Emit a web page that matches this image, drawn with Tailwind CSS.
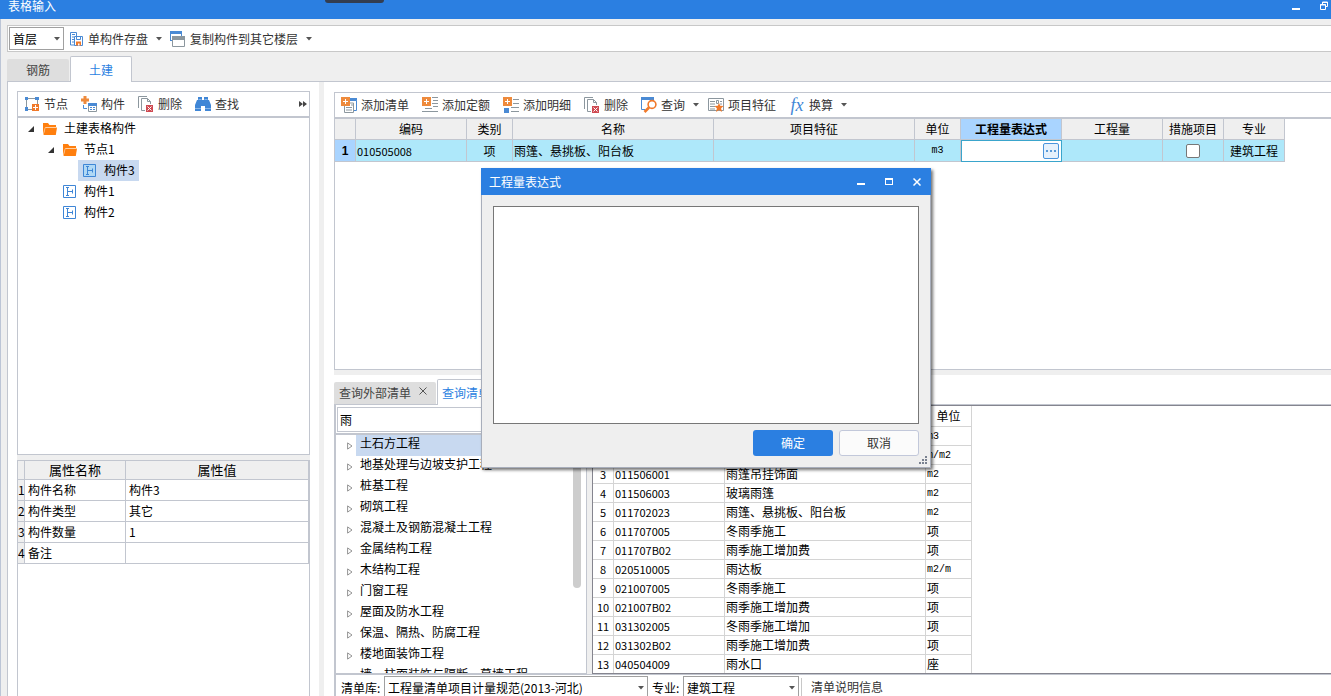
<!DOCTYPE html>
<html lang="zh-CN">
<head>
<meta charset="utf-8">
<title>表格输入</title>
<script src="https://cdn.jsdelivr.net/npm/@tailwindcss/browser@4"></script>
</head>
<body class="relative flex h-screen flex-col overflow-hidden bg-[#efefef] font-['Noto_Sans_CJK_SC',sans-serif] text-[12px] leading-[16px] text-black">

<svg class="hidden">
  <symbol id="i-arrow" viewBox="0 0 6 4"><path d="M0 0h6L3 3.6z" fill="#555"/></symbol>
  <symbol id="i-save" viewBox="0 0 14 16"><path d="M5 14H.5V1.500H6.500V5" fill="none" stroke="#4a8ad4"/><path d="M2 3.500h3M2 6h2M2 8.500h2M2 11h2" stroke="#4a8ad4"/><path d="M4.500 5.500h8v9h-8z" fill="#fff" stroke="#4a8ad4"/><path d="M6.500 5.500v3h4v-3" fill="none" stroke="#4a8ad4"/><path d="M6 10.500h5v4H6z" fill="#f0792a"/><path d="M8 12.500h1.500v2H8z" fill="#fff"/></symbol>
  <symbol id="i-copy" viewBox="0 0 16 16"><path d="M.5 10V.5h11V5M.5 9.500h2" fill="none" stroke="#4a8ad4"/><path d="M0 0h12v3H0z" fill="#4a8ad4"/><path d="M2.500 5.500h12v10h-12z" fill="#fff" stroke="#8c979e"/><path d="M2 5h13v4H2z" fill="#8c979e"/></symbol>
  <symbol id="i-node" viewBox="0 0 16 16"><path d="M2.500 2.500h11v7M8 13.500H2.500v-11" fill="none" stroke="#8c979e"/><path d="M1 1h3v3H1zM11 1h4v3h-4zM1 11h3v4H1z" fill="#4a8ad4"/><path d="M8 8h7v7H8z" fill="#f0792a"/><path d="M11.500 9v5M9 11.500h5" stroke="#fff"/></symbol>
  <symbol id="i-comp" viewBox="0 0 16 16"><path d="M2.500 0h3v2.500H8v3H5.500V8h-3V5.500H0v-3h2.500z" fill="#ee8a3c"/><path d="M2.500 9v3.500H6" fill="none" stroke="#4a8ad4"/><path d="M7.500 7.500h8v8h-8z" fill="#fff" stroke="#8c979e"/><path d="M7 7h9v3H7z" fill="#4a8ad4"/><path d="M9 11.500h2M12 11.500h2M9 13.500h2M12 13.500h2" stroke="#4a8ad4"/></symbol>
  <symbol id="i-del" viewBox="0 0 16 16"><path d="M.5 12V.5H9" fill="none" stroke="#8c979e"/><path d="M7 14.500H3.500v-12H9.500l3 3V8" fill="none" stroke="#8c979e"/><path d="M9.500 2.500v3h3" fill="none" stroke="#8c979e"/><path d="M8 9h7v7H8z" fill="#cf4a52"/><path d="M9.500 10.500l4 4M13.500 10.500l-4 4" stroke="#fff"/></symbol>
  <symbol id="i-find" viewBox="0 0 16 16"><path d="M3 1h4v3h2V1h4v3h1l2 5v6h-6v-5H6v5H0V9l2-5h1z" fill="#3f86d6"/><path d="M3.500 3.500h3M9.500 3.500h3M0 12.500h6M10 12.500h6" stroke="#a9cdf2" stroke-width=".7"/></symbol>
  <symbol id="i-addlist" viewBox="0 0 16 16"><path d="M9 3.500h6.500v10H13" fill="none" stroke="#4a8ad4"/><path d="M9 1h7v2.500H9z" fill="#4a8ad4"/><path d="M3.500 9v6.500h9V6H9" fill="#fff" stroke="#8c979e"/><path d="M5 10.500h6M5 13h6M10 8h2" stroke="#8c979e"/><path d="M0 0h9v9H0z" fill="#ee8a3c"/><path d="M4.500 2v5M2 4.500h5" stroke="#fff"/></symbol>
  <symbol id="i-addquota" viewBox="0 0 16 16"><path d="M10 .5h6M11 3.500h5M10 6.500h6M11 9.500h5M3 11.500h7M0 14.500h16" stroke="#8c979e"/><path d="M0 0h9v9H0z" fill="#ee8a3c"/><path d="M4.500 2v5M2 4.500h5" stroke="#fff"/></symbol>
  <symbol id="i-adddetail" viewBox="0 0 16 16"><path d="M10 2.500h6M10 6.500h6M8 10.500h8M8 14.500h8" stroke="#8c979e"/><path d="M1 11h5v5H1z" fill="#4a8ad4"/><path d="M0 0h9v9H0z" fill="#ee8a3c"/><path d="M4.500 2v5M2 4.500h5" stroke="#fff"/></symbol>
  <symbol id="i-query" viewBox="0 0 16 16"><path d="M4 12.500H.5V1M12.500 1v2" fill="none" stroke="#4a8ad4"/><path d="M0 0h13v3H0z" fill="#4a8ad4"/><circle cx="11" cy="7.500" r="3.900" fill="#fff" stroke="#f0792a" stroke-width="1.600"/><path d="M8 10.500L3.500 15" stroke="#f0792a" stroke-width="2.600"/></symbol>
  <symbol id="i-feature" viewBox="0 0 16 16"><path d="M.5 1.500h15v12H.5z" fill="#fff" stroke="#8c979e"/><path d="M2 4.500h5M2 7h5M2 9.500h5M2 12h5M12 4.500h2M12 7h2" stroke="#8c979e"/><path d="M8.500 3.500h2v3h-2z" fill="none" stroke="#8c979e"/><path d="M11 6l1.200 2.800 3.300.3-2.400 2.200.8 3.700-2.900-2-2.900 2 .8-3.700-2.400-2.200 3.300-.3z" fill="#f0792a"/></symbol>
  <symbol id="i-folder" viewBox="0 0 14 12"><path d="M0 12V0h5l1.500 2H13v2H3z" fill="#ff7f0e"/><path d="M2 4.600h12L12.800 12H.6z" fill="#ff7f0e"/><path d="M.5 10.500L2.200 4.500H13.500" fill="none" stroke="#ffd9b0" stroke-width=".7"/></symbol>
  <symbol id="i-item" viewBox="0 0 13 13"><path d="M.5.500h12v12H.5z" fill="none" stroke="#3f86d6"/><path d="M3 2.500h3M4.500 2.500v8M3 10.500h3M4.500 6.500h5M9.500 4.500v4" fill="none" stroke="#3f86d6"/></symbol>
  <symbol id="i-open" viewBox="0 0 6 6"><path d="M6 0v6H0z" fill="#333"/></symbol>
  <symbol id="i-closed" viewBox="0 0 6 8"><path d="M.6.900L5 4 .6 7.100z" fill="#fff" stroke="#888" stroke-width=".9"/></symbol>
</svg>

<!-- window title -->
<header class="flex h-[19px] shrink-0 items-start justify-between bg-[#2b7fe1] pl-2 text-white">
  <h1 class="leading-[12px]">表格输入</h1>
  <div class="flex gap-5">
    <button aria-label="最小化" class="pt-[7px]"><span class="block h-[2px] w-2 bg-white"></span></button>
    <button aria-label="还原" class="pt-px pr-[3px]"><svg class="h-[9px] w-[8px]" viewBox="0 0 8 9"><path d="M2.500 3V1h5v4.500H6M2 1.500h6" fill="none" stroke="#fff"/><path d="M.5 3.500h5v5h-5z" fill="none" stroke="#fff"/><path d="M0 4h6" stroke="#fff"/></svg></button>
  </div>
</header>
<div class="absolute top-0 left-[325px] h-[3px] w-[59px] rounded-b bg-[#333d50]"></div>

<main class="flex min-h-0 flex-1 flex-col border-l border-[#bcc5d6] pt-1.5 pl-1.5">
  <div class="flex h-[27px] shrink-0 items-center border border-r-0 border-[#c8c8c8] bg-white pl-px text-[#333]">
    <div class="relative">
      <select aria-label="楼层" class="block h-[23px] w-[55px] appearance-none border border-[#a0a0a0] bg-white pl-[3px] text-black"><option>首层</option></select>
      <svg class="pointer-events-none absolute top-2.5 right-1 h-1 w-1.5"><use href="#i-arrow"/></svg>
    </div>
    <button class="ml-1.5 flex items-center gap-1"><svg class="h-4 w-3.5"><use href="#i-save"/></svg>单构件存盘<svg class="ml-1 h-1 w-1.5"><use href="#i-arrow"/></svg></button>
    <button class="ml-2 flex items-center gap-1"><svg class="size-4"><use href="#i-copy"/></svg>复制构件到其它楼层<svg class="ml-1 h-1 w-1.5"><use href="#i-arrow"/></svg></button>
  </div>

  <div role="tablist" class="mt-1 flex h-[25px] shrink-0 items-end gap-px">
    <button role="tab" class="h-[22px] w-[62px] rounded-t-xs bg-[#dedede] text-[#444]">钢筋</button>
    <button role="tab" aria-selected="true" class="relative -mb-px h-[26px] w-[62px] rounded-t-xs border border-b-0 border-[#c2c6cf] bg-white text-[#2b7fe1]">土建</button>
  </div>

  <div class="flex min-h-0 flex-1 border-t border-l border-[#c2c6cf] bg-white">
    <!-- component tree and properties -->
    <aside class="flex w-[311px] shrink-0 flex-col px-[9px] pt-[9px]">
      <div class="flex h-[26px] shrink-0 items-center gap-[13px] border border-[#c2c6cf] pl-1.5 text-[#333]">
        <button class="flex items-center gap-1"><svg class="size-4"><use href="#i-node"/></svg>节点</button>
        <button class="flex items-center gap-1"><svg class="size-4"><use href="#i-comp"/></svg>构件</button>
        <button class="flex items-center gap-1"><svg class="size-4"><use href="#i-del"/></svg>删除</button>
        <button class="flex items-center gap-1"><svg class="size-4"><use href="#i-find"/></svg>查找</button>
        <button aria-label="更多" class="mr-0.5 ml-auto"><svg class="h-[6px] w-[8px]" viewBox="0 0 8 6"><path d="M0 0l4 3-4 3zM4 0l4 3-4 3z" fill="#444"/></svg></button>
      </div>
      <ul role="tree" class="min-h-0 flex-[336] border border-[#c2c6cf] [&_span]:pb-0.5">
        <li class="flex h-[21px] items-center pl-2.5"><svg class="size-1.5"><use href="#i-open"/></svg><svg class="ml-[9px] h-3 w-3.5"><use href="#i-folder"/></svg><span class="ml-[7px]">土建表格构件</span></li>
        <li class="flex h-[21px] items-center pl-[30px]"><svg class="size-1.5"><use href="#i-open"/></svg><svg class="ml-[9px] h-3 w-3.5"><use href="#i-folder"/></svg><span class="ml-[7px]">节点1</span></li>
        <li class="ml-[60px] flex h-[21px] w-[61px] items-center bg-[#c8d9f0] pl-[5px]"><svg class="size-[13px] bg-[#b0d8f5]"><use href="#i-item"/></svg><span class="ml-2">构件3</span></li>
        <li class="flex h-[21px] items-center pl-[45px]"><svg class="size-[13px]"><use href="#i-item"/></svg><span class="ml-2">构件1</span></li>
        <li class="flex h-[21px] items-center pl-[45px]"><svg class="size-[13px]"><use href="#i-item"/></svg><span class="ml-2">构件2</span></li>
      </ul>
      <div class="h-[5px] shrink-0 bg-[#efefef]"></div>
      <div class="min-h-0 flex-[235] overflow-hidden border border-b-0 border-[#c2c6cf]">
        <table class="w-full table-fixed border-separate border-spacing-0 [&_td]:h-[21px] [&_td]:border-r [&_td]:border-b [&_td]:border-[#c2c6cf] [&_td]:py-0 [&_td]:pr-0 [&_td]:pl-[3px] [&_th]:border-r [&_th]:border-b [&_th]:border-[#c2c6cf] [&_th]:p-0 [&_th]:font-normal">
          <colgroup><col class="w-[7px]"><col class="w-[101px]"><col></colgroup>
          <thead><tr class="h-[19px] bg-[#efefef] text-[13px]"><th></th><th>属性名称</th><th>属性值</th></tr></thead>
          <tbody>
            <tr><th class="bg-[#efefef]">1</th><td>构件名称</td><td>构件3</td></tr>
            <tr><th class="bg-[#efefef]">2</th><td>构件类型</td><td>其它</td></tr>
            <tr><th class="bg-[#efefef]">3</th><td>构件数量</td><td>1</td></tr>
            <tr><th class="bg-[#efefef]">4</th><td>备注</td><td></td></tr>
          </tbody>
        </table>
      </div>
    </aside>
    <div class="w-[5px] shrink-0 bg-[#efefef]"></div>

    <section class="flex min-w-0 flex-1 flex-col pt-2.5 pl-2.5">
      <div class="flex min-h-0 flex-[276] flex-col border border-r-0 border-[#c2c6cf]">
        <div class="flex h-[26px] shrink-0 items-center gap-[13px] border-b-2 border-[#c2c6cf] pl-1.5 text-[#333]">
          <button class="flex items-center gap-1"><svg class="size-4"><use href="#i-addlist"/></svg>添加清单</button>
          <button class="flex items-center gap-1"><svg class="size-4"><use href="#i-addquota"/></svg>添加定额</button>
          <button class="flex items-center gap-1"><svg class="size-4"><use href="#i-adddetail"/></svg>添加明细</button>
          <button class="flex items-center gap-1"><svg class="size-4"><use href="#i-del"/></svg>删除</button>
          <button class="-mr-1 flex items-center gap-1"><svg class="size-4"><use href="#i-query"/></svg>查询<svg class="ml-1 h-1 w-1.5"><use href="#i-arrow"/></svg></button>
          <button class="flex items-center gap-1"><svg class="size-4"><use href="#i-feature"/></svg>项目特征</button>
          <button class="flex items-center gap-1"><span aria-hidden="true" class="w-4 font-['Liberation_Serif',serif] text-[18px] text-[#3f86d6] italic">fx</span>换算<svg class="ml-1 h-1 w-1.5"><use href="#i-arrow"/></svg></button>
        </div>
        <table class="w-[950px] table-fixed border-separate border-spacing-0 [&_td]:h-[22px] [&_td]:border-r [&_td]:border-b [&_td]:border-[#c2c6cf] [&_td]:p-0 [&_th]:border-r [&_th]:border-b [&_th]:border-[#c2c6cf] [&_th]:p-0">
          <colgroup><col class="w-[21px]"><col class="w-[111px]"><col class="w-[46px]"><col class="w-[201px]"><col class="w-[201px]"><col class="w-[46px]"><col class="w-[101px]"><col class="w-[101px]"><col class="w-[61px]"><col class="w-[61px]"></colgroup>
          <thead><tr class="h-[21px] bg-[#efefef] [&_th]:font-normal"><th></th><th>编码</th><th>类别</th><th>名称</th><th>项目特征</th><th>单位</th><th class="bg-[#a9d4ff]"><b>工程量表达式</b></th><th>工程量</th><th>措施项目</th><th>专业</th></tr></thead>
          <tbody><tr class="bg-[#aee8fa] text-center">
            <th class="bg-[#a9d4ff] font-['Liberation_Sans',sans-serif] font-bold">1</th>
            <td class="text-left text-[11px]"><span class="pl-px">010505008</span></td><td>项</td><td class="text-left"><span class="pl-px">雨篷、悬挑板、阳台板</span></td><td></td>
            <td class="font-['Liberation_Mono',monospace] text-[10px]">m3</td>
            <td class="bg-white outline outline-1 -outline-offset-1 outline-[#3aa5cc]"><div class="flex justify-end pr-[2px]"><button aria-label="编辑表达式" class="flex size-4 items-center justify-center rounded-xs border border-[#4a94dc] bg-[#e6f1fc]"><svg class="h-[2px] w-2.5" viewBox="0 0 10 2"><path d="M0 0h2v2H0zM4 0h2v2H4zM8 0h2v2H8z" fill="#5a9ad8"/></svg></button></div></td>
            <td></td>
            <td><input type="checkbox" aria-label="措施项目" class="mx-auto block size-3.5 appearance-none rounded-xs border border-[#777] bg-white"></td>
            <td>建筑工程</td>
          </tr></tbody>
        </table>
      </div>
      <div class="h-[5px] shrink-0 bg-[#efefef]"></div>

      <!-- list query pane -->
      <div class="flex min-h-0 flex-[321] flex-col">
        <div role="tablist" class="mt-1 flex h-[25px] shrink-0 items-end gap-px">
          <button role="tab" class="flex h-[22px] w-[102px] items-center rounded-t-xs bg-[#dedede] pl-[5px] text-[#444]">查询外部清单<svg class="mb-1 ml-2 size-2" viewBox="0 0 8 8"><path d="M.5.500l7 7M7.500.500l-7 7" stroke="#555"/></svg></button>
          <button role="tab" aria-selected="true" class="relative -mb-px h-[26px] w-[80px] rounded-t-xs border border-b-0 border-[#c2c6cf] bg-white pl-1 text-left text-[#2b7fe1]">查询清单</button>
        </div>
        <div class="flex min-h-0 flex-1 border-t border-[#c2c6cf]">
          <div class="flex w-[253px] shrink-0 flex-col border-r border-l-2 border-b border-[#c2c6cf]">
            <div class="shrink-0 border-b-2 border-[#c2c6cf] p-px pt-[2px]">
              <input type="text" aria-label="查询" value="雨" class="block h-[25px] w-full border border-[#c2c6cf] pl-[2px]">
            </div>
            <div class="relative min-h-0 flex-1 overflow-hidden">
              <ul role="tree" class="[&_li]:flex [&_li]:h-[21px] [&_li]:items-center [&_li]:pl-[11px] [&_span]:ml-[3px] [&_span]:flex [&_span]:h-full [&_span]:flex-1 [&_span]:items-start [&_span]:pl-1 [&_svg]:h-2 [&_svg]:w-1.5">
                <li><svg><use href="#i-closed"/></svg><span class="bg-[#c8d9f0]">土石方工程</span></li>
                <li><svg><use href="#i-closed"/></svg><span>地基处理与边坡支护工程</span></li>
                <li><svg><use href="#i-closed"/></svg><span>桩基工程</span></li>
                <li><svg><use href="#i-closed"/></svg><span>砌筑工程</span></li>
                <li><svg><use href="#i-closed"/></svg><span>混凝土及钢筋混凝土工程</span></li>
                <li><svg><use href="#i-closed"/></svg><span>金属结构工程</span></li>
                <li><svg><use href="#i-closed"/></svg><span>木结构工程</span></li>
                <li><svg><use href="#i-closed"/></svg><span>门窗工程</span></li>
                <li><svg><use href="#i-closed"/></svg><span>屋面及防水工程</span></li>
                <li><svg><use href="#i-closed"/></svg><span>保温、隔热、防腐工程</span></li>
                <li><svg><use href="#i-closed"/></svg><span>楼地面装饰工程</span></li>
                <li><svg><use href="#i-closed"/></svg><span>墙、柱面装饰与隔断、幕墙工程</span></li>
              </ul>
              <div class="absolute top-1 right-[5px] h-[149px] w-2 rounded-full bg-[#cdcdcd]"></div>
            </div>
          </div>
          <div class="w-[5px] shrink-0 bg-[#efefef]"></div>
          <div class="min-w-0 flex-1 overflow-hidden border-t border-b border-l border-[#85858f]">
            <table class="w-[379px] table-fixed border-separate border-spacing-0 [&_td]:border-r [&_td]:border-b [&_td]:border-[#d4d4d4] [&_td]:py-0 [&_td]:pr-0 [&_td]:pl-px [&_th]:border-r [&_th]:border-b [&_th]:border-[#d4d4d4] [&_th]:p-0 [&_th]:font-normal [&_tbody_tr]:h-[19px]">
              <colgroup><col class="w-[21px]"><col class="w-[111px]"><col class="w-[201px]"><col class="w-[46px]"></colgroup>
              <thead><tr class="h-[21px]"><th></th><th></th><th></th><th>单位</th></tr></thead>
              <tbody>
                <tr><th class="text-[11px]">1</th><td></td><td></td><td class="align-bottom font-['Liberation_Mono',monospace] text-[10px]">m3</td></tr>
                <tr><th class="text-[11px]">2</th><td></td><td></td><td class="align-bottom font-['Liberation_Mono',monospace] text-[10px]">m/m2</td></tr>
                <tr><th class="text-[11px]">3</th><td class="text-[11px]">011506001</td><td>雨篷吊挂饰面</td><td class="align-bottom font-['Liberation_Mono',monospace] text-[10px]">m2</td></tr>
                <tr><th class="text-[11px]">4</th><td class="text-[11px]">011506003</td><td>玻璃雨篷</td><td class="align-bottom font-['Liberation_Mono',monospace] text-[10px]">m2</td></tr>
                <tr><th class="text-[11px]">5</th><td class="text-[11px]">011702023</td><td>雨篷、悬挑板、阳台板</td><td class="align-bottom font-['Liberation_Mono',monospace] text-[10px]">m2</td></tr>
                <tr><th class="text-[11px]">6</th><td class="text-[11px]">011707005</td><td>冬雨季施工</td><td>项</td></tr>
                <tr><th class="text-[11px]">7</th><td class="text-[11px]">011707B02</td><td>雨季施工增加费</td><td>项</td></tr>
                <tr><th class="text-[11px]">8</th><td class="text-[11px]">020510005</td><td>雨达板</td><td class="align-bottom font-['Liberation_Mono',monospace] text-[10px]">m2/m</td></tr>
                <tr><th class="text-[11px]">9</th><td class="text-[11px]">021007005</td><td>冬雨季施工</td><td>项</td></tr>
                <tr><th class="text-[11px]">10</th><td class="text-[11px]">021007B02</td><td>雨季施工增加费</td><td>项</td></tr>
                <tr><th class="text-[11px]">11</th><td class="text-[11px]">031302005</td><td>冬雨季施工增加</td><td>项</td></tr>
                <tr><th class="text-[11px]">12</th><td class="text-[11px]">031302B02</td><td>雨季施工增加费</td><td>项</td></tr>
                <tr><th class="text-[11px]">13</th><td class="text-[11px]">040504009</td><td>雨水口</td><td>座</td></tr>
              </tbody>
            </table>
          </div>
        </div>
        <div class="flex h-[22px] shrink-0 items-start overflow-hidden border-t border-l-2 border-[#c2c6cf] pt-px pl-[5px]">
          <label for="lib" class="w-[43px] shrink-0 pt-1">清单库:</label>
          <div class="relative">
            <select id="lib" class="block h-6 w-[264px] appearance-none border border-[#a0a0a0] bg-white pl-[3px]"><option>工程量清单项目计量规范(2013-河北)</option></select>
            <svg class="pointer-events-none absolute top-2.5 right-1 h-1 w-1.5"><use href="#i-arrow"/></svg>
          </div>
          <label for="major" class="ml-1 w-[31px] shrink-0 pt-1">专业:</label>
          <div class="relative">
            <select id="major" class="block h-6 w-[116px] appearance-none border border-[#a0a0a0] bg-white pl-[3px]"><option>建筑工程</option></select>
            <svg class="pointer-events-none absolute top-2.5 right-1 h-1 w-1.5"><use href="#i-arrow"/></svg>
          </div>
          <button class="mt-0.5 ml-[2px] h-6 border-l border-[#c8c8c8] pb-1.5 pl-[9px] text-[#333]">清单说明信息</button>
        </div>
      </div>
    </section>
  </div>
</main>

<!-- expression dialog -->
<div role="dialog" aria-label="工程量表达式" class="absolute top-[168px] left-[481px] flex h-[300px] w-[450px] flex-col border border-t-0 border-[#a8aebb] bg-[#efefef] shadow-[2px_2px_3px_0px_rgba(0,0,0,0.55)]">
  <div class="-mx-px flex h-[27px] shrink-0 items-center justify-between bg-[#2b7fe1] pr-[10px] pl-2 text-white">
    <h2>工程量表达式</h2>
    <div class="flex items-center gap-5">
      <button aria-label="最小化"><span class="mt-1 block h-[2px] w-2 bg-white"></span></button>
      <button aria-label="最大化"><span class="block h-[7px] w-2 border border-t-2 border-white"></span></button>
      <button aria-label="关闭"><svg class="size-2" viewBox="0 0 8 8"><path d="M.5.500l7 7M7.500.500l-7 7" stroke="#fff" stroke-width="1.500"/></svg></button>
    </div>
  </div>
  <textarea aria-label="表达式" class="mx-[11px] mt-[11px] block min-h-0 flex-1 resize-none border border-[#777] bg-white"></textarea>
  <div class="relative flex shrink-0 justify-end gap-1.5 px-[11px] pt-1.5 pb-[11px]">
    <button class="h-[26px] w-20 rounded-[3px] bg-[#2b7fe1] text-white">确定</button>
    <button class="h-[26px] w-20 rounded-[3px] border border-[#c2c8da] bg-[#fbfbfb] text-[#333]">取消</button>
    <svg class="absolute right-[3px] bottom-[3px] size-2" viewBox="0 0 8 8"><path d="M6 0h2v2H6zM3 3h2v2H3zM6 3h2v2H6zM0 6h2v2H0zM3 6h2v2H3zM6 6h2v2H6z" fill="#7a8290"/></svg>
  </div>
</div>
</body>
</html>
